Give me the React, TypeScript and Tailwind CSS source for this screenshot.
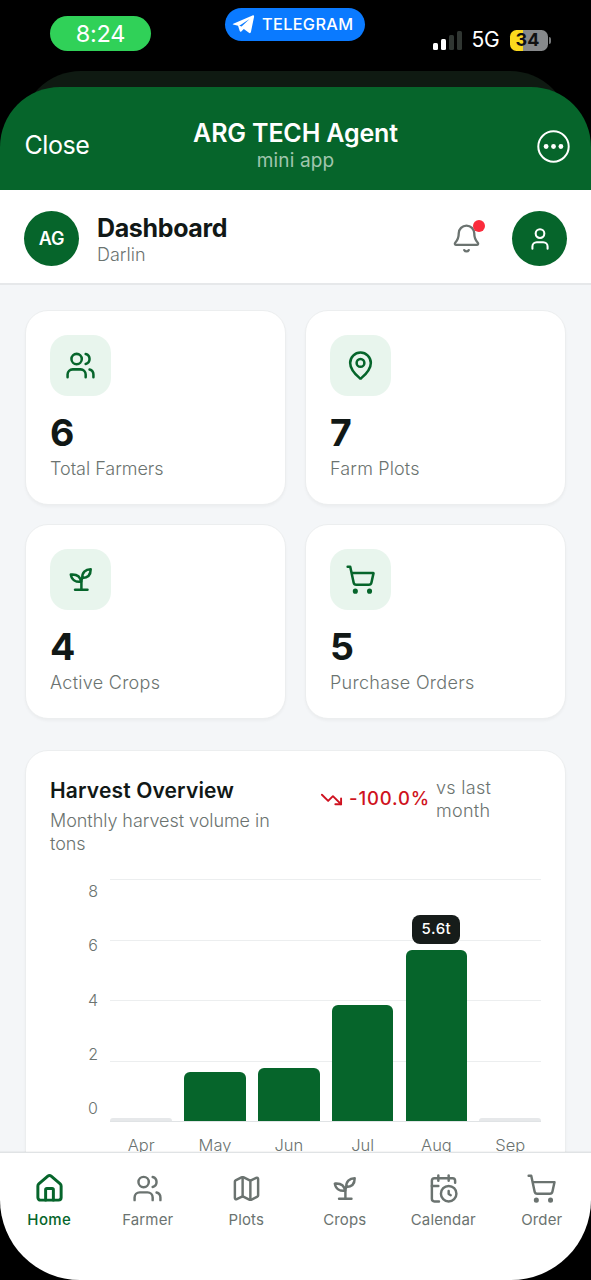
import React from "react";
import {
  Bell,
  CalendarClock,
  House,
  Map as MapIcon,
  MapPin,
  ShoppingCart,
  TrendingDown,
  User,
  Users,
} from "lucide-react";

type IconProps = { size?: number | string; strokeWidth?: number | string };

function Sprout({ size = 24, strokeWidth = 2 }: IconProps) {
  return (
    <svg
      width={size}
      height={size}
      viewBox="0 0 24 24"
      fill="none"
      stroke="currentColor"
      strokeWidth={strokeWidth}
      strokeLinecap="round"
      strokeLinejoin="round"
    >
      <path d="M7.8 20h9.6" />
      <path d="M13.4 10.8c-.8 1.4-.7 2.6-.7 4.2v5" />
      <path d="M4.5 8.2c4.3-.4 7.3 1.4 8 5.4-4 .6-7.3-1.2-8-5.4z" />
      <path d="M19.9 4c0 4.2-2.3 6.7-6.5 6.8-.3-4 2.3-6.7 6.5-6.8z" />
    </svg>
  );
}

function StatusBar() {
  return (
    <div className="flex h-[71px] shrink-0 items-start pr-[40px] pl-[50px] text-white">
      <div className="mt-4 flex h-[35px] w-[101px] items-center justify-center rounded-full bg-[#30d158] text-[23.5px] tracking-[-0.2px]">
        8:24
      </div>
      <div className="mt-2 ml-[74px] flex h-[33px] w-[140px] items-center rounded-full bg-[#0a7aff] pl-[7px]">
        <svg width="23" height="19" viewBox="0 0 22 18" fill="white">
          <path d="M1.2 8.2 19.6.3c.9-.4 1.7.2 1.5 1.3l-3 14.6c-.2 1.1-1 1.3-1.9.8l-4.9-3.6-2.4 2.2c-.5.5-1.3.3-1.5-.4l-1.6-5L1 8.9c-.5-.2-.4-.5.2-.7Z" />
          <path d="m7 10.3 9.8-6.5-7.6 7.2Z" fill="#0a7aff" />
        </svg>
        <span className="ml-[7px] text-[16.3px] font-medium tracking-[0.35px]">TELEGRAM</span>
      </div>
      <div className="mt-[27px] ml-auto flex items-center">
        <div className="flex h-[19px] items-end gap-[3px]">
          <i className="h-[7px] w-[5px] rounded-[1.5px] bg-white" />
          <i className="h-[11px] w-[5px] rounded-[1.5px] bg-white" />
          <i className="h-[15px] w-[5px] rounded-[1.5px] bg-[#303632]" />
          <i className="h-[19px] w-[5px] rounded-[1.5px] bg-[#303632]" />
        </div>
        <span className="ml-[10px] w-[28px] text-[21px] leading-[26px] tracking-[-0.3px]">5G</span>
        <div className="ml-[10px] flex h-[21px] w-[38px] items-center justify-center rounded-[6.5px] bg-[linear-gradient(90deg,#fbd91e_13.5px,#87898b_13.5px)] pr-[2px] text-[18px] leading-none font-bold text-[#111]">
          34
        </div>
        <i className="ml-[1.5px] h-[7px] w-[2px] rounded-r-full bg-[#77797b]" />
      </div>
    </div>
  );
}

function TelegramHeader() {
  return (
    <div className="shrink-0">
      <div className="mx-[21px] -mb-[44px] h-[60px] rounded-t-[60px] bg-[#0f1a12]" />
      <div className="relative flex h-[103px] items-center justify-between rounded-t-[60px] bg-[#06652b] pr-[21px] pl-[24.5px] text-white">
        <span className="mt-[12px] text-[25px] leading-[30px] tracking-[-0.45px]">Close</span>
        <div className="absolute inset-x-0 top-[31px] text-center">
          <div className="text-[25px] leading-[30px] font-semibold tracking-[-0.15px]">ARG TECH Agent</div>
          <div className="mt-px text-[19px] leading-[24px] tracking-[0.15px] text-[#a0c6ae]">mini app</div>
        </div>
        <svg className="mt-[15px]" width="33" height="33" viewBox="0 0 33 33" fill="none">
          <circle cx="16.5" cy="16.5" r="15.2" stroke="white" strokeWidth="2" />
          <circle cx="9.1" cy="16.5" r="2.4" fill="white" />
          <circle cx="16.5" cy="16.5" r="2.4" fill="white" />
          <circle cx="23.9" cy="16.5" r="2.4" fill="white" />
        </svg>
      </div>
    </div>
  );
}

function AppHeader() {
  return (
    <header className="flex h-[95px] shrink-0 items-center border-b-2 border-[#e6e8ea] bg-white px-6 pt-[4px]">
      <div className="flex size-[55px] items-center justify-center rounded-full bg-[#06652b] text-[18px] font-semibold tracking-[-0.2px] text-white">
        AG
      </div>
      <div className="mt-[3px] ml-[18px] grow">
        <h1 className="text-[25px] leading-[29px] font-bold tracking-[-0.35px] text-[#111816]">Dashboard</h1>
        <p className="text-[18px] leading-[24px] font-light text-[#6b7370]">Darlin</p>
      </div>
      <div className="relative mr-[30px] text-[#6b7370]">
        <Bell size={31} strokeWidth={1.8} />
        <i className="absolute -top-[3px] right-[-3px] size-3 rounded-full bg-[#fb2c3c]" />
      </div>
      <div className="flex size-[55px] items-center justify-center rounded-full bg-[#06652b] text-white">
        <User size={26} strokeWidth={1.9} />
      </div>
    </header>
  );
}

const stats = [
  { value: 6, label: "Total Farmers", Icon: Users, track: "tracking-[-0.03px]" },
  { value: 7, label: "Farm Plots", Icon: MapPin, track: "tracking-[0.15px]" },
  { value: 4, label: "Active Crops", Icon: Sprout, track: "tracking-[0.28px]" },
  { value: 5, label: "Purchase Orders", Icon: ShoppingCart, track: "tracking-[0.28px]" },
];

function StatGrid() {
  return (
    <div className="grid grid-cols-2 gap-x-[19px] gap-y-[19px]">
      {stats.map(({ value, label, Icon, track }) => (
        <section
          key={label}
          className="h-[195px] rounded-[23px] border border-[#eceeef] bg-white px-6 pt-6 shadow-[0_2px_3px_rgba(0,0,0,0.035)]"
        >
          <div className="flex size-[61px] items-center justify-center rounded-[18px] bg-[#e8f5ed] text-[#06652b]">
            <Icon size={31} strokeWidth={1.95} />
          </div>
          <div className="mt-[18px] text-[37.5px] leading-[38px] font-bold tracking-[-1px] text-[#111816]">{value}</div>
          <div className={`mt-[5px] text-[18px] leading-[24px] font-light text-[#6b7370] ${track}`}>{label}</div>
        </section>
      ))}
    </div>
  );
}

const months = [
  { name: "Apr", height: 3.5 },
  { name: "May", height: 49.5 },
  { name: "Jun", height: 53 },
  { name: "Jul", height: 116.5 },
  { name: "Aug", height: 171.5, tip: "5.6t" },
  { name: "Sep", height: 3.5 },
];

function HarvestCard() {
  return (
    <section className="mt-[31px] h-[480px] rounded-[23px] border border-[#eceeef] bg-white px-6 pt-6 shadow-[0_2px_3px_rgba(0,0,0,0.035)]">
      <div className="flex items-start">
        <div className="w-[270px]">
          <h2 className="mt-px text-[21px] leading-[30px] font-semibold tracking-[0.15px] text-[#111816]">
            Harvest Overview
          </h2>
          <p className="mt-[3px] w-[240px] text-[18px] leading-[23px] font-light tracking-[-0.05px] text-[#6b7370]">
            Monthly harvest volume in tons
          </p>
        </div>
        <div className="mt-px flex items-center">
          <span className="text-[#cf1220]">
            <TrendingDown size={23} strokeWidth={2} />
          </span>
          <span className="ml-[6px] w-[81px] text-[18.5px] font-medium tracking-[0.85px] text-[#cf1220]">-100.0%</span>
          <span className="ml-[6px] w-[70px] text-[18px] leading-[23px] font-light tracking-[0.3px] text-[#6b7370]">
            vs last month
          </span>
        </div>
      </div>
      <div className="mt-[24px] flex">
        <div className="flex h-[242px] w-[48px] flex-col justify-between text-right text-[16px] leading-[25px] font-light text-[#6b7370]">
          <span>8</span>
          <span>6</span>
          <span>4</span>
          <span>2</span>
          <span>0</span>
        </div>
        <div className="ml-[12.5px] w-[431px]">
          <div className="relative h-[243px]">
            <div className="absolute inset-0 flex flex-col justify-between">
              <i className="h-px bg-[#eceeef]" />
              <i className="h-px bg-[#eceeef]" />
              <i className="h-px bg-[#eceeef]" />
              <i className="h-px bg-[#eceeef]" />
              <i className="h-px bg-[#e0e3e5]" />
            </div>
            <div className="relative grid h-[242px] grid-cols-6 items-end gap-x-[12.2px]">
              {months.map((m) => (
                <div
                  key={m.name}
                  className={`relative ${m.height > 4 ? "rounded-t-[6px] bg-[#06652b]" : "rounded-t-[4px] bg-[#e6e8ea]"}`}
                  style={{ height: m.height }}
                >
                  {m.tip && (
                    <span className="absolute -top-[35px] left-1/2 flex h-[29px] w-[48px] -translate-x-1/2 items-center justify-center rounded-[8px] bg-[#161c1a] text-[15px] font-medium tracking-[0.5px] text-white">
                      {m.tip}
                    </span>
                  )}
                </div>
              ))}
            </div>
          </div>
          <div className="mt-[11px] grid grid-cols-6 gap-x-[12.2px] text-center text-[16.5px] leading-[24px] font-light text-[#6b7370]">
            {months.map((m) => (
              <span key={m.name}>{m.name}</span>
            ))}
          </div>
        </div>
      </div>
    </section>
  );
}

const tabs = [
  { label: "Home", Icon: House, active: true },
  { label: "Farmer", Icon: Users },
  { label: "Plots", Icon: MapIcon },
  { label: "Crops", Icon: Sprout },
  { label: "Calendar", Icon: CalendarClock },
  { label: "Order", Icon: ShoppingCart },
];

function TabBar() {
  return (
    <nav className="grid h-[128px] shrink-0 grid-cols-6 items-start border-t border-[#e0e3e5] bg-white pt-[19.5px] shadow-[0_-1px_1px_rgba(0,0,0,0.04)]">
      {tabs.map(({ label, Icon, active }) => (
        <div
          key={label}
          className={`flex flex-col items-center ${active ? "font-medium tracking-[0.35px] text-[#06652b]" : "font-normal tracking-[0.15px] text-[#6b7370]"}`}
        >
          <Icon size={31} strokeWidth={active ? 2.3 : 1.9} />
          <span className="mt-[6.5px] text-[15px] leading-[20px]">{label}</span>
        </div>
      ))}
    </nav>
  );
}

export default function App() {
  return (
    <div className="h-[1280px] w-[591px] overflow-hidden bg-black font-['Inter',sans-serif]">
      <div className="flex h-full flex-col overflow-hidden rounded-b-[80px]">
        <StatusBar />
        <TelegramHeader />
        <AppHeader />
        <main className="min-h-0 grow overflow-hidden bg-[#f4f6f8] px-[25px] pt-[25px]">
          <StatGrid />
          <HarvestCard />
        </main>
        <TabBar />
      </div>
    </div>
  );
}
